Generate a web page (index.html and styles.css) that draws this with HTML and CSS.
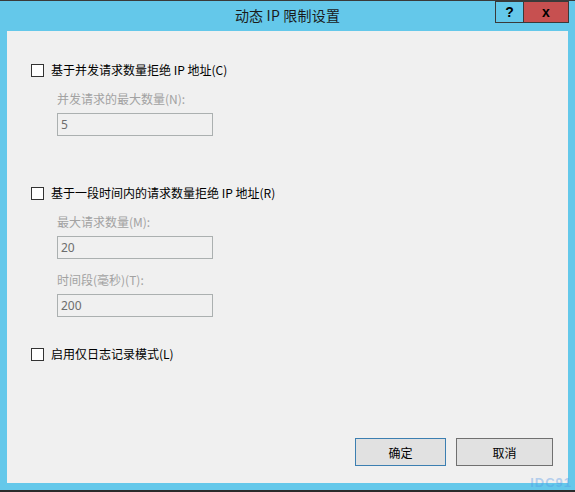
FILE: index.html
```html
<!DOCTYPE html>
<html lang="zh-CN">
<head>
  <meta charset="UTF-8">
  <title>动态 IP 限制设置</title>
  <link rel="stylesheet" href="styles.css">
</head>
<body>
  <div class="window">
    <div class="titlebar">
      <span></span>
      <h1 class="title">动态 IP 限制设置</h1>
      <div class="caption-btns">
        <span class="cap-btn help">?</span>
        <span class="cap-btn close">x</span>
      </div>
    </div>

    <div class="panel">
      <label class="check first">
        <span class="box"></span>基于并发请求数量拒绝 IP 地址(C)
      </label>
      <div class="group">
        <div class="field-label">并发请求的最大数量(N):</div>
        <div class="field">5</div>
      </div>

      <label class="check second">
        <span class="box"></span>基于一段时间内的请求数量拒绝 IP 地址(R)
      </label>
      <div class="group">
        <div class="field-label">最大请求数量(M):</div>
        <div class="field">20</div>
        <div class="field-label">时间段(毫秒)(T):</div>
        <div class="field">200</div>
      </div>

      <label class="check third">
        <span class="box"></span>启用仅日志记录模式(L)
      </label>

      <div class="actions">
        <button class="btn ok">确定</button>
        <button class="btn cancel">取消</button>
      </div>
    </div>
    <div class="watermark">IDC91</div>
  </div>
</body>
</html>
```

FILE: styles.css
```css
body{
  margin: 0;
  font-family: "Noto Sans CJK SC", "Liberation Sans", sans-serif;
  font-size: 12px;
  background: #64c8ea;
}
.window{
  position: relative;
  width: 575px;
  height: 489px;
  border-top: 1px solid #3a3a3a;
  border-bottom: 2px solid #2b2b2b;
  background: #64c8ea;
  display: flex;
  flex-direction: column;
  overflow: hidden;
}
.titlebar{
  height: 30px;
  display: grid;
  grid-template-columns: 1fr auto 1fr;
  align-items: start;
}
.title{
  margin: 0;
  font-size: 14px;
  font-weight: normal;
  color: #1b1b1b;
  line-height: 28px;
  letter-spacing: 0.2px;
}
.caption-btns{
  justify-self: end;
  display: flex;
  margin-right: 6px;
}
.cap-btn{
  height: 22px;
  border: 1px solid #3a3a3a;
  box-sizing: border-box;
  display: flex;
  align-items: center;
  justify-content: center;
  font-family: "Liberation Sans", sans-serif;
  font-weight: bold;
  font-size: 14px;
  color: #000;
}
.help{
  width: 28px;
  border-right: none;
}
.close{
  width: 46px;
  background: #c75050;
}
.panel{
  margin: 0 7px;
  height: 452px;
  background: #f0f0f0;
  padding: 0 15px 0 24px;
  box-sizing: border-box;
  display: flex;
  flex-direction: column;
}
.check{
  display: flex;
  align-items: center;
  height: 16px;
  line-height: 16px;
  color: #000;
}
.check.first{
  margin-top: 31px;
}
.check.second{
  margin-top: 49px;
}
.check.third{
  margin-top: 29px;
}
.box{
  width: 11px;
  height: 11px;
  border: 1px solid #333;
  background: #fff;
  margin-right: 7px;
}
.group{
  padding-left: 26px;
}
.field-label{
  color: #a2a2a2;
  line-height: 16px;
  margin-top: 13px;
}
.field{
  width: 156px;
  height: 23px;
  box-sizing: border-box;
  border: 1px solid #abb0b0;
  margin-top: 6px;
  padding: 0 3px;
  line-height: 21px;
  color: #6d6d6d;
  font-family: "Noto Sans", "Liberation Sans", sans-serif;
  font-size: 12px;
}
.actions{
  margin-top: auto;
  margin-bottom: 17px;
  display: flex;
  justify-content: flex-end;
  gap: 10px;
}
.btn{
  height: 28px;
  background: #e1e1e1;
  border: 1px solid #707070;
  font-family: inherit;
  font-size: 12px;
  color: #000;
  padding: 0;
}
.btn.ok{
  width: 91px;
  border-color: #3c7fb1;
}
.btn.cancel{
  width: 97px;
}
.watermark{
  position: absolute;
  right: 3px;
  bottom: 0;
  font-family: "Liberation Sans", sans-serif;
  font-weight: bold;
  font-size: 13px;
  line-height: 14px;
  letter-spacing: 1px;
  color: rgba(80, 150, 230, 0.4);
}
```
